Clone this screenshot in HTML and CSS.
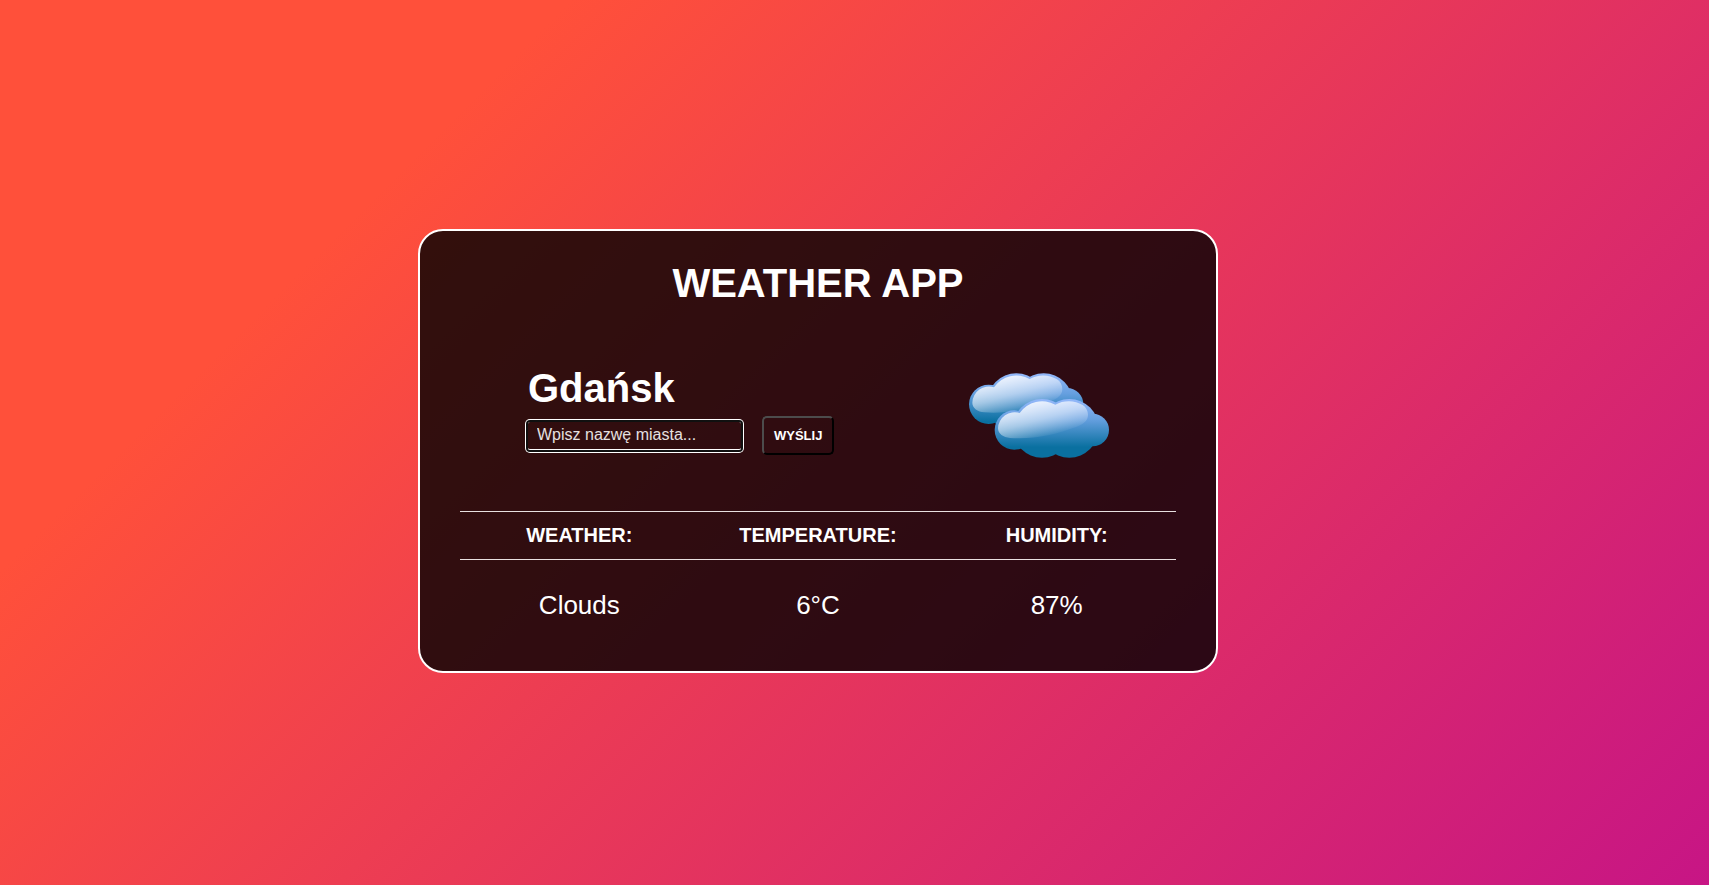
FILE: index.html
```
<!DOCTYPE html>
<html lang="pl">
<head>
<meta charset="utf-8">
<title>Weather App</title>
<link rel="stylesheet" href="styles.css">
</head>
<body>
<main class="card">
  <h1 class="title">WEATHER APP</h1>
  <section class="place">
    <div class="search">
      <h2 class="city">Gdańsk</h2>
      <form class="form">
        <input class="field" type="text" aria-label="Nazwa miasta" placeholder="Wpisz nazwę miasta...">
        <button class="send" type="button">WYŚLIJ</button>
      </form>
    </div>
    <svg class="clouds" viewBox="27 24 420 255" role="img" aria-label="Clouds">
      <defs>
        <linearGradient id="body" gradientUnits="userSpaceOnUse" x1="0" y1="102" x2="0" y2="278">
          <stop offset="0" stop-color="#94b8fa"/>
          <stop offset="0.35" stop-color="#659fdf"/>
          <stop offset="0.82" stop-color="#0a70a0"/>
          <stop offset="1" stop-color="#0a70a0"/>
        </linearGradient>
        <linearGradient id="shine" gradientUnits="userSpaceOnUse" x1="232" y1="105" x2="264" y2="218">
          <stop offset="0" stop-color="#fff" stop-opacity="0.85"/>
          <stop offset="0.5" stop-color="#fff" stop-opacity="0.5"/>
          <stop offset="1" stop-color="#fff" stop-opacity="0"/>
        </linearGradient>
        <g id="cloud">
          <g fill="url(#body)">
            <circle cx="163" cy="195" r="59"/>
            <circle cx="246" cy="190" r="88"/>
            <circle cx="328" cy="190" r="88"/>
            <circle cx="398" cy="195" r="49"/>
          </g>
          <path fill="url(#shine)" d="M114 190 A50 50 0 0 1 179 144 A82 82 0 0 1 286 119 A82 82 0 0 1 368 120 C378 126 384 138 384 149 C384 168 369 178 346 187 C286 210 218 224 150 219 C130 217 114 207 114 190 Z"/>
        </g>
      </defs>
      <use href="#cloud" x="-77" y="-77"/>
      <use href="#cloud"/>
    </svg>
  </section>
  <table class="report">
    <thead>
      <tr><th scope="col">WEATHER:</th><th scope="col">TEMPERATURE:</th><th scope="col">HUMIDITY:</th></tr>
    </thead>
    <tbody>
      <tr><td>Clouds</td><td>6°C</td><td>87%</td></tr>
    </tbody>
  </table>
</main>
</body>
</html>
```
FILE: styles.css
```
* {
  box-sizing: border-box;
}

body {
  display: flex;
  align-items: center;
  justify-content: center;
  min-height: 100vh;
  margin: 0;
  padding: 17px 73px 0 0;
  background: linear-gradient(135deg, #ff503a 22%, #c71585);
  color: #fff;
  font-family: "Liberation Sans", Arial, sans-serif;
}

.card {
  width: 100%;
  max-width: 800px;
  padding: 29px 40px 30px;
  border: 2px solid #fff;
  border-radius: 25px;
  background: rgba(0, 0, 0, 0.8);
}

.title {
  margin: 0 0 59px;
  font-size: 40px;
  line-height: 46px;
  text-align: center;
}

.place {
  display: flex;
  align-items: flex-start;
  justify-content: space-between;
  margin-bottom: 53px;
  padding: 0 67px 0 68px;
}

.city {
  margin: 0 0 5px;
  font-size: 40px;
  line-height: 46px;
}

.form {
  display: flex;
  align-items: center;
  gap: 21px;
}

.field {
  width: 213px;
  height: 28px;
  padding: 0 9px;
  border: 0;
  border-bottom: 1px solid #fff;
  border-radius: 2px;
  outline: 0;
  background: transparent;
  box-shadow: 0 0 0 2px #101010, 0 0 0 3px #fff;
  color: #fff;
  font-family: inherit;
  font-size: 16px;
}

.field::placeholder {
  color: #e6e0e0;
}

.send {
  height: 39px;
  padding: 0 10px;
  border: 2px solid;
  border-color: #4c4c4c #000 #000 #4c4c4c;
  border-radius: 5px;
  background: transparent;
  color: #fff;
  font-family: inherit;
  font-size: 13px;
  font-weight: bold;
}

.clouds {
  width: 140px;
  height: 85px;
  margin-top: 8px;
}

.report {
  width: 100%;
  border-collapse: separate;
  border-spacing: 0;
  table-layout: fixed;
  text-align: center;
}

.report th {
  padding: 12px 0;
  border-top: 1px solid #e8e0e0;
  border-bottom: 1px solid #e8e0e0;
  font-size: 20px;
  line-height: 23px;
}

.report td {
  padding: 30px 0 21px;
  font-size: 26px;
  line-height: 30px;
}
```
